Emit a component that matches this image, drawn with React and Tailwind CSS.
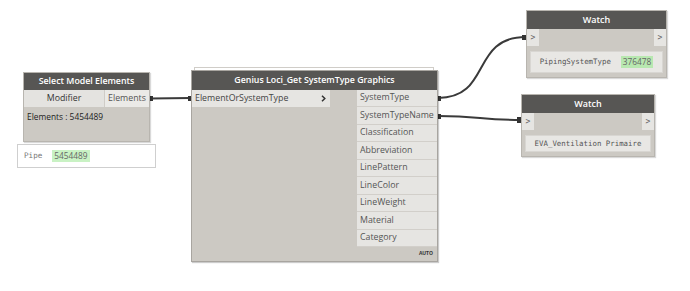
import React from "react";

const font = { fontFamily: '"Open Sans", "Noto Sans", sans-serif' };
const mono = { fontFamily: '"DejaVu Sans Mono", "Liberation Mono", monospace' };

const outputs = [
  "SystemType",
  "SystemTypeName",
  "Classification",
  "Abbreviation",
  "LinePattern",
  "LineColor",
  "LineWeight",
  "Material",
  "Category",
];

function Watch({ className, value, green }) {
  return (
    <div className={`absolute flex flex-col bg-[#ccc9c3] border border-[#b8b5af] shadow-[1px_1px_1px_rgba(0,0,0,0.15)] ${className}`}>
      <div className="h-[18px] bg-[#575654] flex items-center justify-center text-white text-[9px] font-semibold">Watch</div>
      <div className="h-[17px] flex justify-between">
        <div className="w-[12px] bg-[#e6e5e2] text-[#666] text-[8px] flex items-center justify-center" style={mono}>&gt;</div>
        <div className="w-[12px] bg-[#e6e5e2] text-[#666] text-[8px] flex items-center justify-center" style={mono}>&gt;</div>
      </div>
      <div className="flex-1 px-[3px] pt-[5px] pb-[4px] flex">
        <div className="flex-1 bg-[#e8e7e4] border border-[#d8d6d2] flex items-center justify-center gap-[10px] text-[#555] text-[7.4px]" style={mono}>
          {value && <span>{value}</span>}
          {green && (
            <span className="bg-[#b8e8b0] px-[2px] text-[8.3px] text-[#666]" style={font}>{green}</span>
          )}
        </div>
      </div>
    </div>
  );
}

export default function App() {
  return (
    <div className="relative w-[690px] h-[291px] bg-white overflow-hidden" style={font}>
      <svg className="absolute inset-0" width="690" height="291">
        <g fill="none" stroke="#3a3a3a" strokeWidth="2">
          <path d="M150,98.5 L191,98" />
          <path d="M438,98 C492,98 470,37 526,37" />
          <path d="M438,116 C480,116 480,120 521,120" />
        </g>
        <g fill="#333">
          <rect x="149" y="96" width="4" height="5" />
          <rect x="188" y="96" width="4" height="5" />
          <rect x="437" y="96" width="4" height="5" />
          <rect x="437" y="114" width="4" height="5" />
          <rect x="522" y="35" width="4" height="5" />
          <rect x="517" y="117" width="4" height="6" />
        </g>
      </svg>

      {/* Select Model Elements */}
      <div className="absolute left-[23px] top-[72px] w-[127px] h-[70px] flex flex-col bg-[#ccc9c3] border border-[#b8b5af] shadow-[1px_1px_1px_rgba(0,0,0,0.15)]">
        <div className="h-[17px] bg-[#575654] flex items-center justify-center text-white text-[8.8px] font-semibold">Select Model Elements</div>
        <div className="h-[17px] flex text-[8.8px]">
          <div className="w-[81px] bg-[#e4e3e0] border-r border-[#cfccc7] flex items-center justify-center text-[#333]">Modifier</div>
          <div className="flex-1 bg-[#ebeae7] flex items-center justify-center text-[#555]">Elements</div>
        </div>
        <div className="px-[3px] pt-[4px] text-[8.4px] text-[#222]">Elements : 5454489</div>
      </div>

      {/* Pipe preview */}
      <div className="absolute left-[17px] top-[144px] w-[139px] h-[24px] bg-white border border-[#cfcfcf] flex items-center pl-[6px] gap-[10px]">
        <span className="text-[7.6px] text-[#777]" style={mono}>Pipe</span>
        <span className="bg-[#c9f2c4] px-[2px] text-[8.3px] leading-[12px] text-[#666]">5454489</span>
      </div>

      {/* Genius Loci node */}
      <div className="absolute left-[194px] top-[67px] w-[240px] h-[3px] border-t border-x border-[#d0cdc8]" />
      <div className="absolute left-[191px] top-[70px] w-[247px] h-[192px] flex flex-col bg-[#ccc9c3] border border-[#a8a5a0] shadow-[1px_1px_1px_rgba(0,0,0,0.2)]">
        <div className="h-[19px] bg-[#575654] flex items-center justify-center text-white text-[8.8px] font-semibold">Genius Loci_Get SystemType Graphics</div>
        <div className="flex flex-1">
          <div className="w-[138px]">
            <div className="h-[17px] bg-[#e6e5e2] flex items-center justify-between pl-[3px] pr-[4px] text-[8.8px] text-[#444]">
              <span>ElementOrSystemType</span>
              <svg width="5" height="7" viewBox="0 0 5 7">
                <path d="M1,0.8 L3.8,3.5 L1,6.2" fill="none" stroke="#333" strokeWidth="1.5" />
              </svg>
            </div>
          </div>
          <div className="flex-1" />
          <div className="w-[80px] flex flex-col">
            {outputs.map((o) => (
              <div key={o} className="h-[17.5px] bg-[#e6e5e2] border-b border-[#d2cfca] flex items-center pl-[3px] text-[8.8px] text-[#555]">
                {o}
              </div>
            ))}
          </div>
        </div>
        <div className="h-[14px] flex items-center justify-end pr-[4px] text-[5px] font-bold text-[#333]">AUTO</div>
      </div>

      <Watch className="left-[526px] top-[10px] w-[141px] h-[68px]" value="PipingSystemType" green="376478" />
      <Watch className="left-[521px] top-[94px] w-[134px] h-[63px]" value="EVA_Ventilation Primaire" />
    </div>
  );
}
